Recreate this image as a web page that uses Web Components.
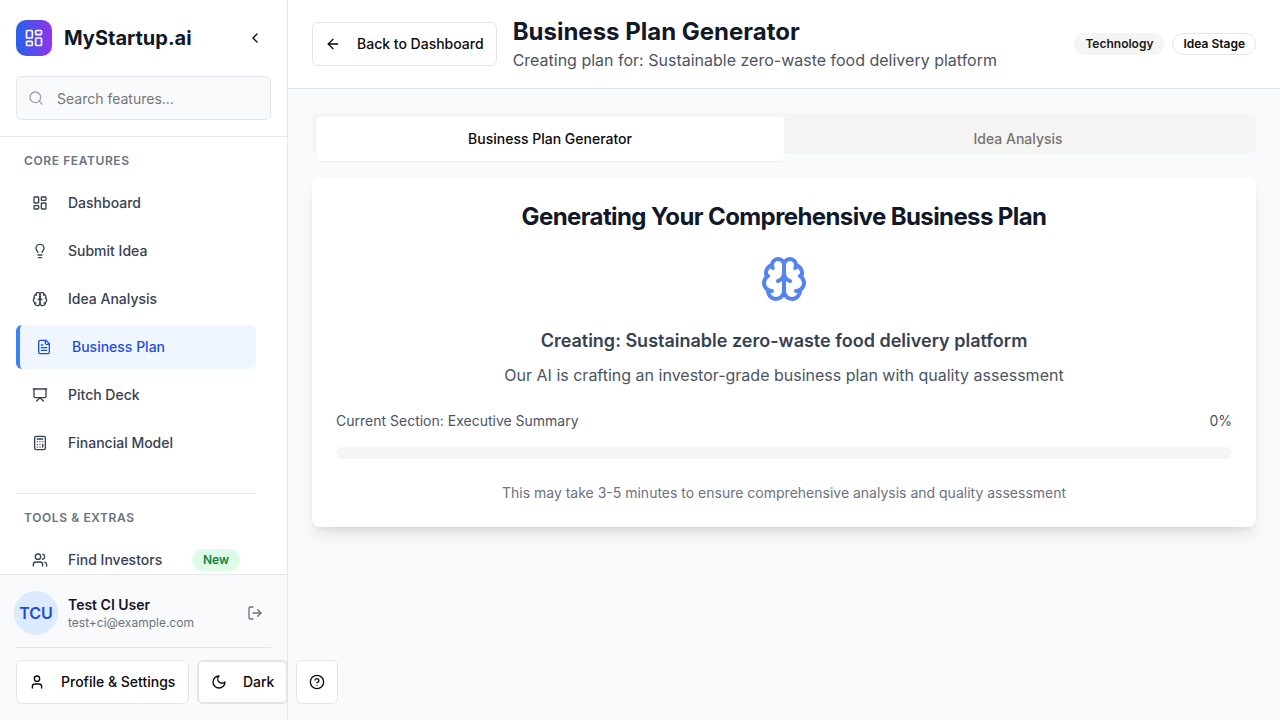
<!DOCTYPE html>
<html lang="en">
<head>
<meta charset="utf-8">
<title>MyStartup.ai</title>
<style>
html,body{margin:0;height:100%;overflow:hidden}
body{font-family:Inter,"Liberation Sans",sans-serif;font-size:16px;line-height:24px;color:#0c0a09;background:#f9fafb}
</style>
</head>
<body>
<startup-app></startup-app>
<script>
const ICONS = {
  dashboard: '<rect width="7" height="9" x="3" y="3" rx="1"/><rect width="7" height="5" x="14" y="3" rx="1"/><rect width="7" height="9" x="14" y="12" rx="1"/><rect width="7" height="5" x="3" y="16" rx="1"/>',
  chevron: '<path d="m15 18-6-6 6-6"/>',
  search: '<circle cx="11" cy="11" r="8"/><path d="m21 21-4.3-4.3"/>',
  bulb: '<path d="M15 14c.2-1 .7-1.7 1.5-2.5 1-.9 1.5-2.2 1.5-3.5A6 6 0 0 0 6 8c0 1 .2 2.2 1.5 3.5.7.7 1.3 1.5 1.5 2.5"/><path d="M9 18h6"/><path d="M10 22h4"/>',
  brain: '<path d="M12 5a3 3 0 1 0-5.997.125 4 4 0 0 0-2.526 5.77 4 4 0 0 0 .556 6.588A4 4 0 1 0 12 18Z"/><path d="M12 5a3 3 0 1 1 5.997.125 4 4 0 0 1 2.526 5.77 4 4 0 0 1-.556 6.588A4 4 0 1 1 12 18Z"/><path d="M15 13a4.5 4.5 0 0 1-3-4 4.5 4.5 0 0 1-3 4"/><path d="M17.599 6.5a3 3 0 0 0 .399-1.375"/><path d="M6.003 5.125A3 3 0 0 0 6.401 6.5"/><path d="M3.477 10.896a4 4 0 0 1 .585-.396"/><path d="M19.938 10.5a4 4 0 0 1 .585.396"/><path d="M6 18a4 4 0 0 1-1.967-.516"/><path d="M19.967 17.484A4 4 0 0 1 18 18"/>',
  file: '<path d="M15 2H6a2 2 0 0 0-2 2v16a2 2 0 0 0 2 2h12a2 2 0 0 0 2-2V7Z"/><path d="M14 2v4a2 2 0 0 0 2 2h4"/><path d="M10 9H8"/><path d="M16 13H8"/><path d="M16 17H8"/>',
  deck: '<path d="M2 3h20"/><path d="M21 3v11a2 2 0 0 1-2 2H5a2 2 0 0 1-2-2V3"/><path d="m7 21 5-5 5 5"/>',
  calc: '<rect width="16" height="20" x="4" y="2" rx="2"/><path d="M8 6h8"/><path d="M16 14v4"/><path d="M16 10h.01"/><path d="M12 10h.01"/><path d="M8 10h.01"/><path d="M12 14h.01"/><path d="M8 14h.01"/><path d="M12 18h.01"/><path d="M8 18h.01"/>',
  users: '<path d="M16 21v-2a4 4 0 0 0-4-4H6a4 4 0 0 0-4 4v2"/><circle cx="9" cy="7" r="4"/><path d="M22 21v-2a4 4 0 0 0-3-3.87"/><path d="M16 3.13a4 4 0 0 1 0 7.75"/>',
  logout: '<path d="M9 21H5a2 2 0 0 1-2-2V5a2 2 0 0 1 2-2h4"/><path d="m16 17 5-5-5-5"/><path d="M21 12H9"/>',
  user: '<path d="M19 21v-2a4 4 0 0 0-4-4H9a4 4 0 0 0-4 4v2"/><circle cx="12" cy="7" r="4"/>',
  moon: '<path d="M12 3a6 6 0 0 0 9 9 9 9 0 1 1-9-9Z"/>',
  help: '<circle cx="12" cy="12" r="10"/><path d="M9.09 9a3 3 0 0 1 5.83 1c0 2-3 3-3 3"/><path d="M12 17h.01"/>',
  back: '<path d="m12 19-7-7 7-7"/><path d="M19 12H5"/>'
};

function define(name, render) {
  customElements.define(name, class extends HTMLElement {
    constructor() { super(); this.attachShadow({mode: 'open'}); }
    connectedCallback() { this.shadowRoot.innerHTML = render(this); }
  });
}

define('ui-icon', el => `<style>
:host{display:block;flex:none;width:var(--size,16px);height:var(--size,16px)}svg{display:block;width:100%;height:100%}
</style><svg viewBox="0 0 24 24" fill="none" stroke="currentColor" stroke-width="2" stroke-linecap="round" stroke-linejoin="round">${ICONS[el.getAttribute('name')]}</svg>`);

define('ui-button', el => `<style>
:host{display:flex;flex:none;box-sizing:border-box;height:44px;align-items:center;gap:16px;padding:0 12px;border:1px solid #e7e5e4;border-radius:6px;background:#fff;font-size:14px;line-height:20px;font-weight:500;color:#0c0a09;white-space:nowrap}
:host([heavy]){border-width:2px}
</style><ui-icon name="${el.getAttribute('icon')}"></ui-icon><slot></slot>`);

define('ui-badge', () => `<style>
:host{display:block;flex:none;box-sizing:border-box;height:22px;padding:2px 10px;border:1px solid #e7e5e4;border-radius:11px;font-size:12px;line-height:16px;font-weight:600}
:host([tone=muted]){background:#f5f5f4;border-color:transparent;color:#1c1917}
:host([tone=green]){background:#dcfce7;border-color:transparent;color:#15803d}
</style><slot></slot>`);

define('nav-item', el => `<style>
:host{display:flex;box-sizing:border-box;height:44px;align-items:center;padding:0 16px;border-radius:6px;font-size:14px;line-height:20px;font-weight:500;color:#374151}
:host([active]){background:#eff6ff;color:#1d4ed8;border-left:4px solid #3b82f6}
ui-icon{margin-right:20px}.label{flex:1}
</style><ui-icon name="${el.getAttribute('icon')}"></ui-icon><span class="label"><slot></slot></span><slot name="badge"></slot>`);

define('nav-section', el => `<style>
:host{display:block}
h3{margin:0 0 12px;padding:0 8px;font-size:12px;line-height:16px;font-weight:600;letter-spacing:.6px;color:#6b7280;text-transform:uppercase}
div{display:flex;flex-direction:column;gap:4px}
</style><h3>${el.getAttribute('heading')}</h3><div><slot></slot></div>`);

define('brand-header', () => `<style>
:host{display:block;box-sizing:border-box;height:137px;padding:20px 16px 16px;border-bottom:1px solid #e5e7eb}
.row{display:flex;align-items:center;height:36px;margin-bottom:20px}
.logo{display:grid;place-items:center;width:36px;height:36px;border-radius:10px;background:linear-gradient(90deg,#2563eb,#9333ea);color:#fff;--size:20px}
.name{flex:1;margin-left:12px;font-size:20px;line-height:28px;font-weight:700;color:#111827}
.chev{margin-right:8px}
.search{display:flex;align-items:center;box-sizing:border-box;height:44px;padding:0 11px;border:1px solid #e5e7eb;border-radius:6px;background:#f9fafb;font-size:14px;line-height:20px;color:#757575}
.search ui-icon{color:#9ca3af;margin-right:13px}
.search span{padding-top:2px}
</style><div class="row"><span class="logo"><ui-icon name="dashboard"></ui-icon></span><span class="name">MyStartup.ai</span><ui-icon class="chev" name="chevron"></ui-icon></div>
<div class="search"><ui-icon name="search"></ui-icon><span>Search features...</span></div>`);

define('user-panel', () => `<style>
:host{display:block;box-sizing:border-box;height:146px;padding:16px 16px 0;border-top:1px solid #e5e7eb;background:#f9fafb}
.who{display:flex;align-items:center;height:44px;padding-bottom:12px;border-bottom:1px solid #e5e7eb}
.avatar{flex:none;width:40px;height:40px;margin:0 10px 0 -2px;border:2px solid #dbeafe;border-radius:50%}
.avatar span{display:grid;place-items:center;height:40px;border-radius:50%;background:#dbeafe;color:#1d4ed8;font-weight:600}
.text{flex:1}
.name{font-size:14px;line-height:20px;font-weight:600;color:#111827}
.mail{font-size:12px;line-height:16px;color:#6b7280}
.out{margin-right:8px;color:#6b7280}
.actions{display:flex;gap:8px;margin-top:12px}
.profile{padding-right:12.5px}
</style><div class="who"><div class="avatar"><span>TCU</span></div><div class="text"><div class="name">Test CI User</div><div class="mail">test+ci@example.com</div></div><ui-icon class="out" name="logout"></ui-icon></div>
<div class="actions"><ui-button class="profile" icon="user">Profile &amp; Settings</ui-button><ui-button heavy icon="moon">Dark</ui-button><ui-button icon="help"></ui-button></div>`);

define('app-sidebar', () => `<style>
:host{display:flex;flex-direction:column;box-sizing:border-box;width:288px;height:720px;border-right:1px solid #e5e7eb;background:#fff;position:relative;z-index:1}
brand-header,user-panel{flex:none}
nav{flex:1;min-height:0;overflow:hidden;padding:16px 31px 0 16px}
.second{margin-top:28px;padding-top:16px;border-top:1px solid #e5e7eb}
</style><brand-header></brand-header><nav>
<nav-section heading="Core Features"><nav-item icon="dashboard">Dashboard</nav-item><nav-item icon="bulb">Submit Idea</nav-item><nav-item icon="brain">Idea Analysis</nav-item><nav-item icon="file" active>Business Plan</nav-item><nav-item icon="deck">Pitch Deck</nav-item><nav-item icon="calc">Financial Model</nav-item></nav-section>
<nav-section class="second" heading="Tools &amp;amp; Extras"><nav-item icon="users">Find Investors<ui-badge slot="badge" tone="green">New</ui-badge></nav-item></nav-section>
</nav><user-panel></user-panel>`);

define('page-header', () => `<style>
:host{display:flex;box-sizing:border-box;height:89px;align-items:center;padding:0 24px;border-bottom:1px solid #e5e7eb;background:#fff}
.titles{flex:1;margin-left:16px}
h1{margin:0;font-size:24px;line-height:32px;font-weight:700;color:#111827}
p{margin:0;color:#4b5563}
.badges{display:flex;gap:8px}
</style><ui-button icon="back">Back to Dashboard</ui-button><div class="titles"><h1>Business Plan Generator</h1><p>Creating plan for: Sustainable zero-waste food delivery platform</p></div>
<div class="badges"><ui-badge tone="muted">Technology</ui-badge><ui-badge>Idea Stage</ui-badge></div>`);

define('tab-bar', () => `<style>
:host{display:grid;grid-template-columns:1fr 1fr;box-sizing:border-box;height:40px;padding:4px;border-radius:6px;background:#f5f5f4}
div{display:grid;place-items:center;height:44px;border-radius:4px;font-size:14px;line-height:20px;font-weight:500;color:#78716c}
.on{background:#fff;color:#0c0a09;box-shadow:0 1px 2px rgba(0,0,0,.05)}
</style><div class="on">Business Plan Generator</div><div>Idea Analysis</div>`);

define('progress-card', () => `<style>
:host{display:flex;flex-direction:column;box-sizing:border-box;height:350px;padding:24px;border-radius:8px;background:#fff;box-shadow:0 10px 15px -3px rgba(0,0,0,.1),0 4px 6px -4px rgba(0,0,0,.1);text-align:center}
h2{margin:4px 0 0;font-size:24px;line-height:24px;font-weight:700;letter-spacing:-.6px;color:#111827}
ui-icon{--size:48px;margin:26px auto 24px;color:#2563eb;opacity:.78}
h3{margin:0 0 8px;font-size:18px;line-height:28px;font-weight:600;color:#374151}
p{margin:0;color:#4b5563}
.row{display:flex;justify-content:space-between;margin-top:24px;font-size:14px;line-height:20px;color:#4b5563}
.bar{height:12px;margin-top:16px;border-radius:6px;background:#f5f5f4}
.note{margin-top:24px;font-size:14px;line-height:20px;color:#6b7280}
</style><h2>Generating Your Comprehensive Business Plan</h2><ui-icon name="brain"></ui-icon><h3>Creating: Sustainable zero-waste food delivery platform</h3><p>Our AI is crafting an investor-grade business plan with quality assessment</p>
<div class="row"><span>Current Section: Executive Summary</span><span>0%</span></div><div class="bar"></div><p class="note">This may take 3-5 minutes to ensure comprehensive analysis and quality assessment</p>`);

define('startup-app', () => `<style>
:host{display:grid;grid-template-columns:288px 1fr;height:720px}
main{min-width:0}
.body{display:flex;flex-direction:column;gap:24px;padding:24px}
</style><app-sidebar></app-sidebar><main><page-header></page-header><div class="body"><tab-bar></tab-bar><progress-card></progress-card></div></main>`);
</script>
</body>
</html>
